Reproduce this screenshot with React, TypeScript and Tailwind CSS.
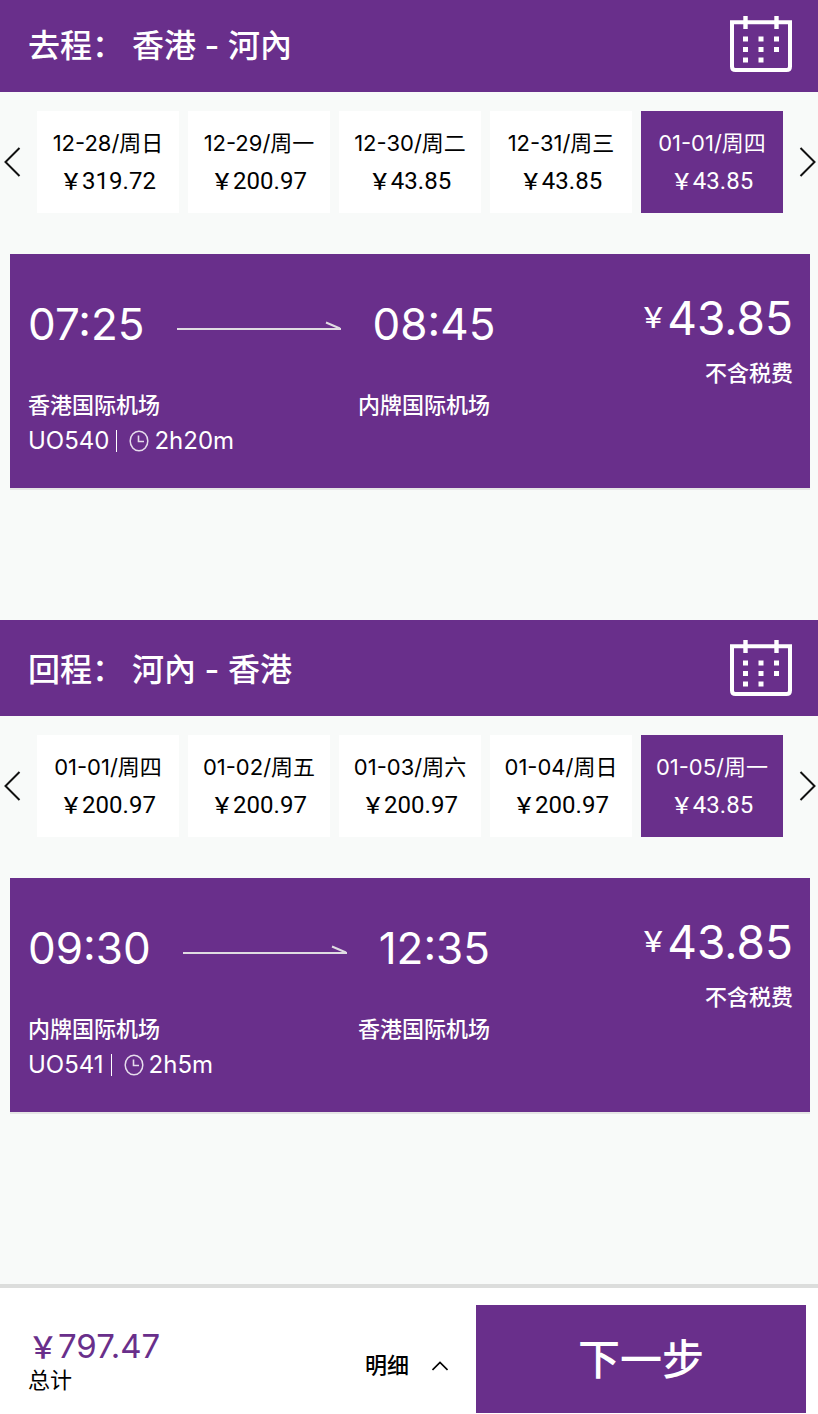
import { useState } from "react";

type Fare = {
  date: string;
  price: string;
};

type Flight = {
  departTime: string;
  arriveTime: string;
  from: string;
  to: string;
  number: string;
  duration: string;
  price: string;
};

type Leg = {
  id: string;
  label: string;
  route: string;
  fares: Fare[];
  flight: Flight;
};

const legs: Leg[] = [
  {
    id: "outbound",
    label: "去程：",
    route: "香港 - 河內",
    fares: [
      { date: "12-28/周日", price: "319.72" },
      { date: "12-29/周一", price: "200.97" },
      { date: "12-30/周二", price: "43.85" },
      { date: "12-31/周三", price: "43.85" },
      { date: "01-01/周四", price: "43.85" },
    ],
    flight: {
      departTime: "07:25",
      arriveTime: "08:45",
      from: "香港国际机场",
      to: "内牌国际机场",
      number: "UO540",
      duration: "2h20m",
      price: "43.85",
    },
  },
  {
    id: "return",
    label: "回程：",
    route: "河內 - 香港",
    fares: [
      { date: "01-01/周四", price: "200.97" },
      { date: "01-02/周五", price: "200.97" },
      { date: "01-03/周六", price: "200.97" },
      { date: "01-04/周日", price: "200.97" },
      { date: "01-05/周一", price: "43.85" },
    ],
    flight: {
      departTime: "09:30",
      arriveTime: "12:35",
      from: "内牌国际机场",
      to: "香港国际机场",
      number: "UO541",
      duration: "2h5m",
      price: "43.85",
    },
  },
];

function CalendarIcon() {
  return (
    <svg width="62" height="56" viewBox="0 0 62 56" fill="none" aria-hidden>
      <path
        d="M2 6.2H60V50.5Q60 54 56.5 54H5.5Q2 54 2 50.5Z"
        stroke="white"
        strokeWidth="4"
      />
      <path d="M15.5 0V13M46.5 0V13" stroke="white" strokeWidth="4.4" />
      <path
        d="M13 20.5h5v5h-5zM28.5 20.5h5v5h-5zM44 20.5h5v5h-5zM13 31h5v5h-5zM28.5 31h5v5h-5zM44 31h5v5h-5zM13 41.5h5v5h-5zM28.5 41.5h5v5h-5z"
        fill="white"
      />
    </svg>
  );
}

function ChevronIcon({ direction }: { direction: "left" | "right" }) {
  return (
    <svg width="17" height="30" viewBox="0 0 17 30" fill="none" aria-hidden>
      <path
        d={direction === "left" ? "M15.5 1L1.5 15L15.5 29" : "M1.5 1L15.5 15L1.5 29"}
        stroke="#111"
        strokeWidth="2"
      />
    </svg>
  );
}

function RouteArrow() {
  return (
    <svg width="164" height="12" viewBox="0 0 164 12" fill="none" aria-hidden>
      <path d="M0 11H164" stroke="#e0dce2" strokeWidth="2" />
      <path d="M149 4.5L163 10.5" stroke="#e0dce2" strokeWidth="2" />
    </svg>
  );
}

function ClockIcon() {
  return (
    <svg width="20" height="22" viewBox="0 0 20 22" fill="none" aria-hidden>
      <ellipse cx="10" cy="11" rx="8.8" ry="9.8" stroke="#e6dcec" strokeWidth="1.5" />
      <path d="M9.5 5.5V11.5H15" stroke="#e6dcec" strokeWidth="1.6" />
    </svg>
  );
}

function LegHeader({ leg, first }: { leg: Leg; first: boolean }) {
  return (
    <header
      className={`flex items-center justify-between bg-[#692f8b] pr-[26px] pb-5 pl-7 text-white ${
        first ? "pt-4" : "pt-5"
      }`}
    >
      <h2 className="flex gap-2 pt-1 text-[32px] leading-10 font-medium">
        <span>{leg.label}</span>
        <span>{leg.route}</span>
      </h2>
      <button type="button" aria-label="选择日期">
        <CalendarIcon />
      </button>
    </header>
  );
}

function FareStrip({ fares }: { fares: Fare[] }) {
  const [selected, setSelected] = useState(fares.length - 1);

  return (
    <div className="flex items-center justify-between pt-[19px]">
      <button type="button" aria-label="前一天" className="w-[37px] pl-1">
        <ChevronIcon direction="left" />
      </button>
      <div className="grid flex-1 grid-cols-5 gap-[9px]">
        {fares.map((fare, index) => (
          <button
            key={fare.date}
            type="button"
            aria-pressed={index === selected}
            onClick={() => setSelected(index)}
            className={`py-[13px] whitespace-nowrap ${
              index === selected ? "bg-[#692f8b] text-white" : "bg-white text-black"
            }`}
          >
            <span className="block text-[22px] leading-[38px]">{fare.date}</span>
            <span className="block font-[Roboto,'Noto_Sans_CJK_SC',sans-serif] text-2xl leading-[38px]">
              <span className="text-[22px] leading-none font-medium">￥</span>
              {fare.price}
            </span>
          </button>
        ))}
      </div>
      <button type="button" aria-label="后一天" className="flex w-[35px] justify-end pr-[2px]">
        <ChevronIcon direction="right" />
      </button>
    </div>
  );
}

function FlightCard({ flight }: { flight: Flight }) {
  return (
    <article className="mt-[41px] mr-2 ml-[10px] flex justify-between bg-[#692f8b] pr-[17px] pb-[29px] pl-[18px] text-white shadow-[0_2px_0_#e5e5e5]">
      <div className="flex-1 pt-[42px]">
        <div className="flex items-center gap-8 text-[44px] leading-[56px]">
          <span>{flight.departTime}</span>
          <RouteArrow />
          <span>{flight.arriveTime}</span>
        </div>
        <div className="mt-[35px] flex text-[22px] leading-9 font-medium">
          <span className="w-[330px]">{flight.from}</span>
          <span>{flight.to}</span>
        </div>
        <div className="flex items-center text-2xl leading-9">
          <span>{flight.number}</span>
          <span className="mr-3 ml-[7px] h-[22px] w-px bg-white" />
          <ClockIcon />
          <span className="ml-[5px]">{flight.duration}</span>
        </div>
      </div>
      <div className="pt-[36px] text-right">
        <p className="flex items-center justify-end text-[46px] leading-[56px]">
          <span className="text-[28px] font-medium">￥</span>
          {flight.price}
        </p>
        <p className="mt-[9px] text-[22px] leading-9 font-medium">不含税费</p>
      </div>
    </article>
  );
}

export default function App() {
  return (
    <div
      lang="zh-CN"
      className="flex min-h-screen flex-col bg-[#f8faf9] font-[Inter,'Noto_Sans_CJK_SC',sans-serif]"
    >
      <main className="flex flex-1 flex-col gap-[132px]">
        {legs.map((leg, index) => (
          <section key={leg.id}>
            <LegHeader leg={leg} first={index === 0} />
            <FareStrip fares={leg.fares} />
            <FlightCard flight={leg.flight} />
          </section>
        ))}
      </main>

      <footer className="flex border-t-4 border-[#dcdddc] bg-white pr-3 pb-px pl-7">
        <div className="flex-1 pt-[41px] leading-[34px]">
          <p className="text-[33px] text-[#692f8b]">
            <span className="text-[30px] leading-none font-medium">￥</span>
            797.47
          </p>
          <p className="text-[22px]">总计</p>
        </div>
        <button type="button" className="mr-7 flex items-center gap-[23px] pt-[30px] text-[22px] font-medium">
          明细
          <svg width="16" height="10" viewBox="0 0 16 10" fill="none" aria-hidden>
            <path d="M0.5 9L8 1.5L15.5 9" stroke="black" strokeWidth="1.6" />
          </svg>
        </button>
        <button type="button" className="mt-[17px] h-[108px] w-[330px] bg-[#692f8b] text-[42px] font-medium text-white">
          下一步
        </button>
      </footer>
    </div>
  );
}
